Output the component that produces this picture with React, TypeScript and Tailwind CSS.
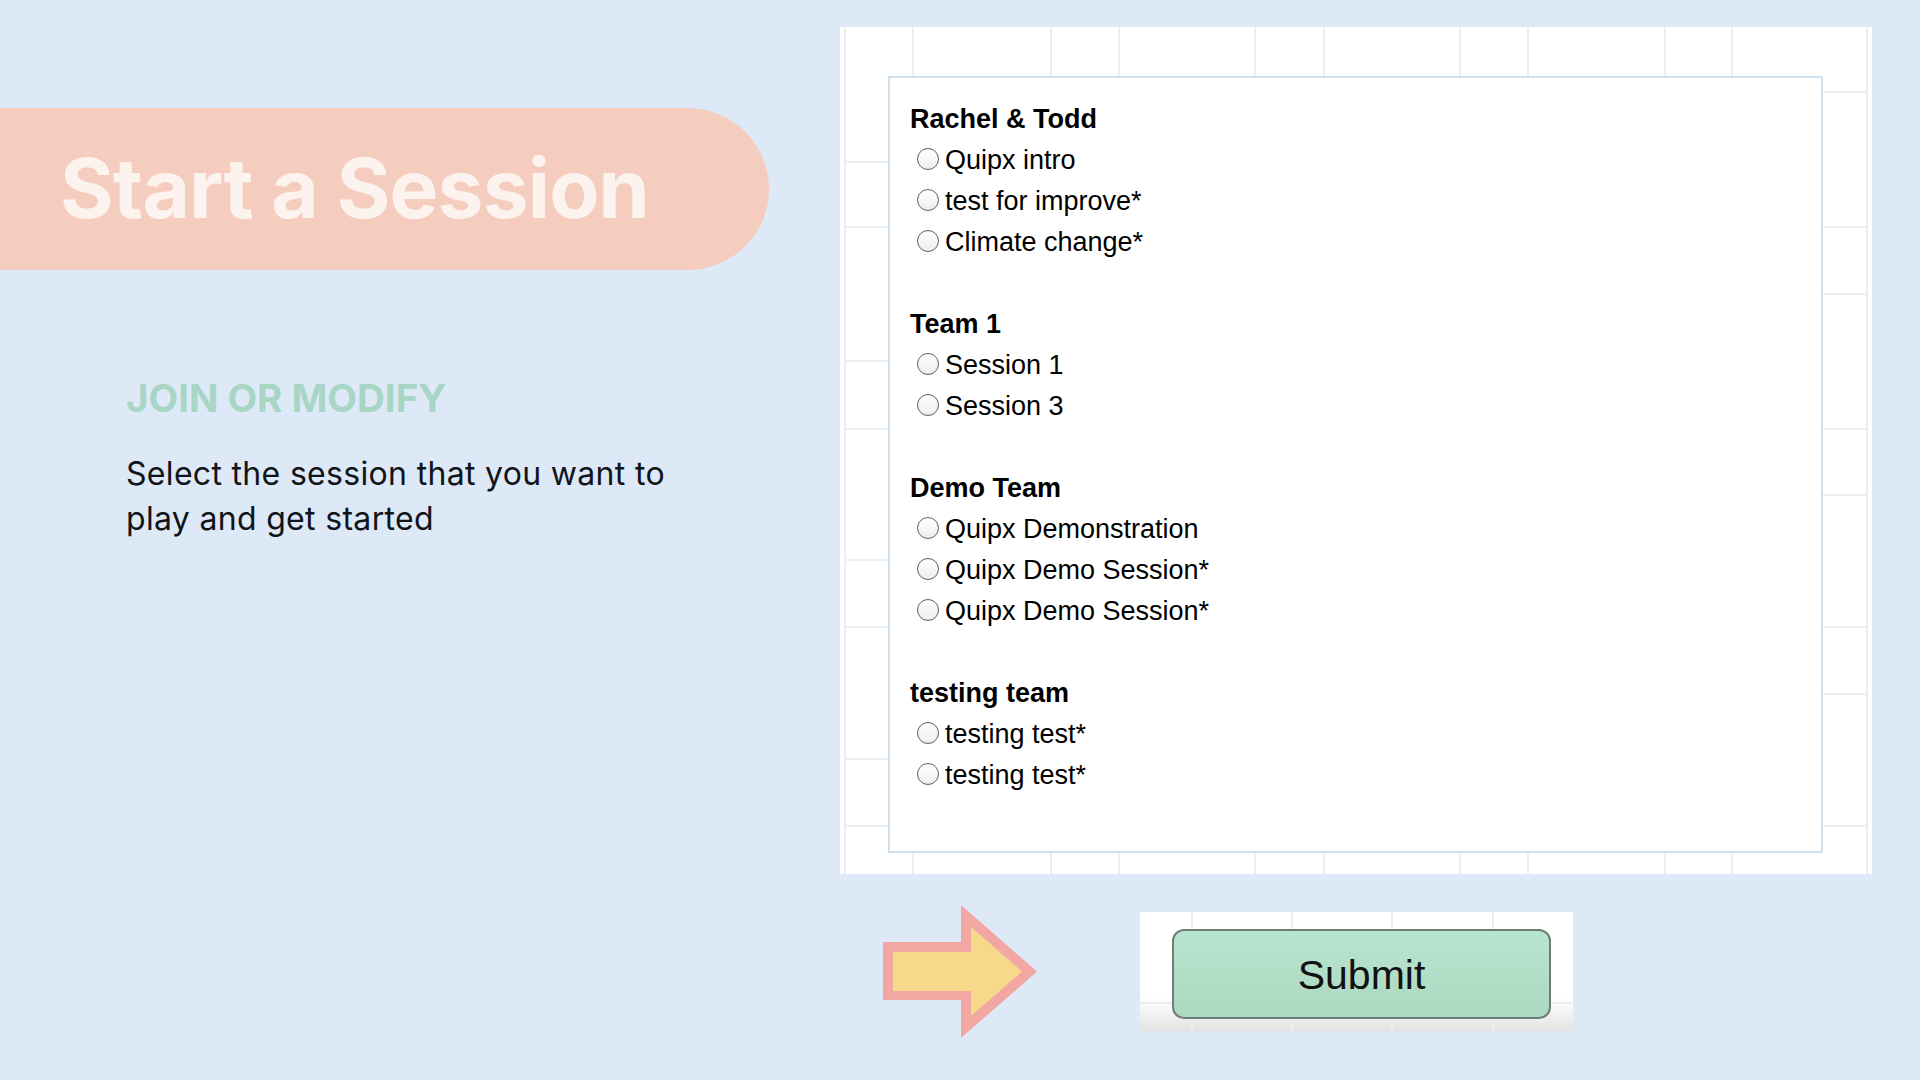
import { useState } from 'react'

const groups = [
  { team: 'Rachel & Todd', sessions: ['Quipx intro', 'test for improve*', 'Climate change*'] },
  { team: 'Team 1', sessions: ['Session 1', 'Session 3'] },
  { team: 'Demo Team', sessions: ['Quipx Demonstration', 'Quipx Demo Session*', 'Quipx Demo Session*'] },
  { team: 'testing team', sessions: ['testing test*', 'testing test*'] },
]

// faint spreadsheet-like grid behind the session list
const vLines = [5, 73, 211, 279, 415, 484, 620, 688, 825, 892, 1027]
const leftRows = [135, 200, 334, 402, 533, 600, 732, 799]
const rightRows = [65, 200, 267, 402, 468, 600, 667, 799]

function PanelGrid() {
  return (
    <svg className="absolute inset-0" width="1032" height="847" viewBox="0 0 1032 847">
      {vLines.map(x => (
        <line key={x} x1={x} y1={0} x2={x} y2={847} stroke="#eceff1" strokeWidth="2" />
      ))}
      {leftRows.map(y => (
        <line key={'l' + y} x1={5} y1={y} x2={48} y2={y} stroke="#eceff1" strokeWidth="2" />
      ))}
      {rightRows.map(y => (
        <line key={'r' + y} x1={983} y1={y} x2={1027} y2={y} stroke="#eceff1" strokeWidth="2" />
      ))}
    </svg>
  )
}

function Radio({ checked, onClick }: { checked: boolean; onClick: () => void }) {
  return (
    <button
      onClick={onClick}
      className="w-[22px] h-[22px] rounded-full border-[1.5px] border-[#5f5f5f] bg-gradient-to-b from-white to-[#eeeeee] flex items-center justify-center shrink-0 -mt-[3px]"
    >
      {checked && <span className="w-[11px] h-[11px] rounded-full bg-[#2f6fde]" />}
    </button>
  )
}

function Arrow() {
  return (
    <svg width="154" height="133" viewBox="0 0 154 133" className="shrink-0">
      <polygon points="0,37 78,37 78,0 154,66.5 78,133 78,95 0,95" fill="#f2a7a2" />
      <polygon points="10,47 88,47 88,22 139,66.5 88,111 88,86 10,86" fill="#f6d98b" />
    </svg>
  )
}

export default function App() {
  const [selected, setSelected] = useState<string | null>(null)

  return (
    <div className="min-h-screen w-full bg-[#dde9f7] flex font-['Inter',sans-serif]">
      {/* Left side */}
      <div className="w-[840px] shrink-0 pt-[108px]">
        <div className="w-[769px] h-[162px] bg-[#f5cdbf] rounded-r-full flex items-center pl-[60px]">
          <h1 className="text-[82px] font-bold text-[#fcf3ee] tracking-[-0.01em] leading-none">
            Start a Session
          </h1>
        </div>

        <div className="pl-[126px] pt-[105px]">
          <h2 className="text-[38.5px] leading-[46px] font-bold text-[#a9d5c5]">JOIN OR MODIFY</h2>
          <p className="mt-[30px] text-[32px] tracking-[0.01em] leading-[45px] text-[#111418] w-[570px]">
            Select the session that you want to play and get started
          </p>
        </div>
      </div>

      {/* Right side */}
      <div className="pt-[27px]">
        <div className="relative w-[1032px] h-[847px] bg-white pl-[48px] pt-[49px]">
          <PanelGrid />
          <div className="relative w-[935px] h-[777px] border-2 border-[#cfe0ee] bg-white pl-[20px] pt-[21px] font-['Liberation_Sans',Arial,sans-serif] text-[27px] text-black">
            {groups.map((g, gi) => (
              <div key={gi} className="mb-[41px]">
                <div className="h-[41px] flex items-center font-bold">{g.team}</div>
                {g.sessions.map((s, si) => {
                  const id = gi + '-' + si
                  return (
                    <div key={id} className="h-[41px] flex items-center pl-[7px] gap-[6px]">
                      <Radio checked={selected === id} onClick={() => setSelected(id)} />
                      <span>{s}</span>
                    </div>
                  )
                })}
              </div>
            ))}
          </div>
        </div>

        <div className="mt-[31px] flex items-center">
          <div className="ml-[43px]">
            <Arrow />
          </div>
          <div className="relative ml-[103px] w-[433px] h-[119px] bg-[linear-gradient(to_bottom,#ffffff_72%,#e3e3e3)] pl-[32px] pt-[17px]">
            <svg className="absolute inset-0" width="433" height="119" viewBox="0 0 433 119">
              {[52, 152, 252, 353].map(x => (
                <line key={x} x1={x} y1={0} x2={x} y2={119} stroke="#eceeef" strokeWidth="2" />
              ))}
              <line x1={0} y1={91} x2={433} y2={91} stroke="#eceeef" strokeWidth="2" />
            </svg>
            <button className="relative w-[379px] h-[90px] rounded-[12px] border-2 border-[#6f7d75] bg-gradient-to-b from-[#b8e5cf] to-[#acd8c1] font-['Liberation_Sans',Arial,sans-serif] text-[41px] text-[#111] pt-[4px]">
              Submit
            </button>
          </div>
        </div>
      </div>
    </div>
  )
}
